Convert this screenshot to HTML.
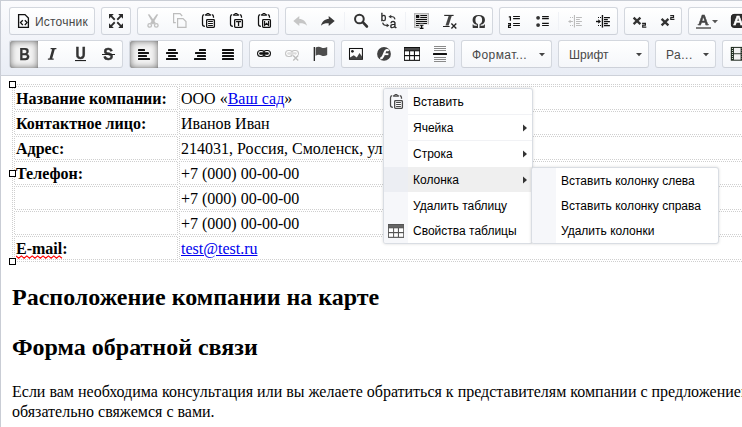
<!DOCTYPE html>
<html><head><meta charset="utf-8">
<style>
*{box-sizing:border-box;margin:0;padding:0}
html,body{width:742px;height:427px;overflow:hidden;background:#fff}
body{position:relative;font-family:"Liberation Sans",sans-serif;font-size:12px;color:#333}
#tb{position:absolute;left:0;top:0;width:742px;height:76px;background:linear-gradient(#fbfbfd,#e9edf5);border-top:1px solid #c9cdd5;border-bottom:1px solid #cdd1d9;border-left:1px solid #c9cdd5}
.g{position:absolute;height:28px;border:1px solid #d3d7de;border-bottom-color:#cdd1d9;border-radius:3px;background:linear-gradient(#ffffff,#f5f7fa);}
.r1{top:7px}.r2{top:40px}
.ic{position:absolute;width:16px;height:16px}
.ic svg{display:block;width:16px;height:16px;overflow:visible}
.on{position:absolute;top:0;height:27px;width:28px;background:#f3f3f3;box-shadow:inset 0 0 7px rgba(0,0,0,.55),inset 0 0 1px rgba(0,0,0,.45);border-radius:3px 0 0 3px}
.sep{position:absolute;top:4px;width:1px;height:18px;background:#f0f2f6}
.lbl{position:absolute;font-size:12px;color:#484848;white-space:nowrap;line-height:14px}
.arr{position:absolute;width:0;height:0;border-left:3px solid transparent;border-right:3px solid transparent;border-top:3px solid #474747}
#ed{position:absolute;left:0;top:76px;width:742px;height:351px;background:#fff;border-left:1px solid #c9cdd5;font-family:"Liberation Serif",serif;color:#000;overflow:hidden}
.t{position:absolute;white-space:nowrap;font-family:"Liberation Serif",serif;font-size:16px;line-height:18px;color:#000}
.b{font-weight:bold}
.lnk{color:#00e;text-decoration:underline}
.hl{position:absolute;height:1px;background-image:linear-gradient(90deg,#cfcfcf 50%,transparent 50%);background-size:2px 1px}
.vl{position:absolute;width:1px;background-image:linear-gradient(#cfcfcf 50%,transparent 50%);background-size:1px 2px}
.hl.o{background-position:1px 0}.vl.o{background-position:0 1px}
.hd{position:absolute;width:7px;height:7px;border:1px solid #000;background:#fff}
.h2{position:absolute;white-space:nowrap;font-family:"Liberation Serif",serif;font-weight:bold;font-size:24px;line-height:28px;color:#000}
.menu{position:absolute;background:#fff;border:1px solid #d9dde3;border-radius:3px;box-shadow:0 0 3px rgba(0,0,0,.15);overflow:hidden}
.menu .gut{position:absolute;left:0;top:0;bottom:0;width:24px;background:#f6f7fa}
.mi{position:absolute;left:0;right:0;height:25px}
.mi.hov{background:#efefef}
.mi.hov .gut2{position:absolute;left:0;top:0;width:24px;height:25px;background:#eceef3}
.mt{position:absolute;font-family:"Liberation Sans",sans-serif;font-size:12px;color:#000;white-space:nowrap;line-height:14px}
.ma{position:absolute;width:0;height:0;border-top:3px solid transparent;border-bottom:3px solid transparent;border-left:3px solid #333}
</style></head><body>
<div id="tb"></div>
<!--TB-->
<div class="g r1" style="left:9px;width:86px"></div>
<div class="g r1" style="left:101px;width:30px"></div>
<div class="g r1" style="left:137px;width:142px"></div>
<div class="g r1" style="left:285px;width:208px"><div class="sep" style="left:58px"></div><div class="sep" style="left:119px"></div></div>
<div class="g r1" style="left:499px;width:119px"><div class="sep" style="left:58px"></div></div>
<div class="g r1" style="left:624px;width:58px"></div>
<div class="g r1" style="left:688px;width:70px"></div>
<div class="g r2" style="left:9px;width:114px"><div class="on" style="left:0"></div></div>
<div class="g r2" style="left:129px;width:114px"><div class="on" style="left:0"></div></div>
<div class="g r2" style="left:249px;width:86px"></div>
<div class="g r2" style="left:341px;width:114px"></div>
<div class="g r2" style="left:461px;width:91px"></div>
<div class="g r2" style="left:558px;width:91px"></div>
<div class="g r2" style="left:655px;width:61px"></div>
<div class="g r2" style="left:722px;width:40px"></div>
<div class="lbl" style="left:35px;top:15px;letter-spacing:0.2px">Источник</div>
<div class="lbl" style="left:472px;top:48px;letter-spacing:0.4px">Формат...</div>
<div class="lbl" style="left:569px;top:48px">Шрифт</div>
<div class="lbl" style="left:666px;top:48px;letter-spacing:0.5px">Ра...</div>
<svg id="ics" width="742" height="76" style="position:absolute;left:0;top:0;will-change:transform"><g transform="translate(16,13)"><path d="M2.6,1.6 H9 L12.4,5 V14.4 H2.6 Z" fill="none" stroke="#111" stroke-width="1.3"/><path d="M6.8,7.2 L4.5,9.6 L6.8,12 M8.8,7.2 L11.1,9.6 L8.8,12" fill="none" stroke="#111" stroke-width="1.3"/></g>
<g transform="translate(108,13)"><g transform="translate(8,8) scale(1,1)"><path d="M-7,-7 H-2.2 L-3.9,-5.2 L-0.6,-1.9 L-1.9,-0.6 L-5.2,-3.9 L-7,-2.2 Z" fill="#2b2b2b"/></g><g transform="translate(8,8) scale(-1,1)"><path d="M-7,-7 H-2.2 L-3.9,-5.2 L-0.6,-1.9 L-1.9,-0.6 L-5.2,-3.9 L-7,-2.2 Z" fill="#2b2b2b"/></g><g transform="translate(8,8) scale(1,-1)"><path d="M-7,-7 H-2.2 L-3.9,-5.2 L-0.6,-1.9 L-1.9,-0.6 L-5.2,-3.9 L-7,-2.2 Z" fill="#2b2b2b"/></g><g transform="translate(8,8) scale(-1,-1)"><path d="M-7,-7 H-2.2 L-3.9,-5.2 L-0.6,-1.9 L-1.9,-0.6 L-5.2,-3.9 L-7,-2.2 Z" fill="#2b2b2b"/></g></g>
<g transform="translate(144,13)"><path d="M3.8,1.4 L5.4,1.2 L11.8,10 L9.6,11.5 Z" fill="#bfbfbf"/><path d="M14.2,1.4 L12.6,1.2 L6.2,10 L8.4,11.5 Z" fill="#bfbfbf"/><circle cx="5.7" cy="12.4" r="1.8" fill="none" stroke="#bfbfbf" stroke-width="1.3"/><circle cx="12.3" cy="12.4" r="1.8" fill="none" stroke="#bfbfbf" stroke-width="1.3"/></g>
<g transform="translate(172,13)"><path d="M3.8,9.6 H1.6 V0.6 H8 L10.2,3" fill="none" stroke="#bdbdbd" stroke-width="1.2"/><path d="M5.6,5.6 H11 L14,8.6 V14.4 H5.6 Z" fill="none" stroke="#bdbdbd" stroke-width="1.2"/></g>
<g transform="translate(200,13)"><path d="M4.2,1.7 C3,1.8 2.5,2.5 2.5,3.7 V11.3 C2.5,12.7 3.2,13.4 4.9,13.4" fill="none" stroke="#111" stroke-width="1.25"/><path d="M11.8,1.7 C13,1.8 13.5,2.5 13.5,3.7 V4.7" fill="none" stroke="#111" stroke-width="1.25"/><path d="M5.1,2.8 V1.5 C5.1,1.1 5.4,0.9 5.8,0.9 H6.2 C6.4,0.3 6.9,0 7.4,0 H8.6 C9.1,0 9.6,0.3 9.8,0.9 H10.2 C10.6,0.9 10.9,1.1 10.9,1.5 V2.8 Z" fill="#111"/><path d="M6.9,1.5 H9.1" stroke="#888" stroke-width="0.8"/><rect x="6.65" y="6.65" width="7.75" height="7.75" rx="0.8" fill="#fff" stroke="#111" stroke-width="1.3"/><path d="M8.1,8.55 H12.9 M8.1,10.5 H12.9 M8.1,12.5 H12.9" stroke="#111" stroke-width="1.05"/></g>
<g transform="translate(228,13)"><path d="M4.2,1.7 C3,1.8 2.5,2.5 2.5,3.7 V11.3 C2.5,12.7 3.2,13.4 4.9,13.4" fill="none" stroke="#111" stroke-width="1.25"/><path d="M11.8,1.7 C13,1.8 13.5,2.5 13.5,3.7 V4.7" fill="none" stroke="#111" stroke-width="1.25"/><path d="M5.1,2.8 V1.5 C5.1,1.1 5.4,0.9 5.8,0.9 H6.2 C6.4,0.3 6.9,0 7.4,0 H8.6 C9.1,0 9.6,0.3 9.8,0.9 H10.2 C10.6,0.9 10.9,1.1 10.9,1.5 V2.8 Z" fill="#111"/><path d="M6.9,1.5 H9.1" stroke="#888" stroke-width="0.8"/><rect x="6.65" y="6.65" width="7.75" height="7.75" rx="0.8" fill="#fff" stroke="#111" stroke-width="1.3"/><path d="M8.1,8.6 H13 M10.55,8.6 V12.9" stroke="#111" stroke-width="1.3" fill="none"/></g>
<g transform="translate(256,13)"><path d="M4.2,1.7 C3,1.8 2.5,2.5 2.5,3.7 V11.3 C2.5,12.7 3.2,13.4 4.9,13.4" fill="none" stroke="#111" stroke-width="1.25"/><path d="M11.8,1.7 C13,1.8 13.5,2.5 13.5,3.7 V4.7" fill="none" stroke="#111" stroke-width="1.25"/><path d="M5.1,2.8 V1.5 C5.1,1.1 5.4,0.9 5.8,0.9 H6.2 C6.4,0.3 6.9,0 7.4,0 H8.6 C9.1,0 9.6,0.3 9.8,0.9 H10.2 C10.6,0.9 10.9,1.1 10.9,1.5 V2.8 Z" fill="#111"/><path d="M6.9,1.5 H9.1" stroke="#888" stroke-width="0.8"/><rect x="6.65" y="6.65" width="7.75" height="7.75" rx="0.8" fill="#fff" stroke="#111" stroke-width="1.3"/><path d="M8.6,8 V12.3 L10.55,10.3 L12.5,12.3 V8" stroke="#111" stroke-width="1.15" fill="none"/></g>
<g transform="translate(292,13)"><path d="M1.3,8 L7.3,3 V6 C11,6 14.2,8.5 15,12.8 C13,10.6 10.5,10.1 7.3,10.2 V13 Z" fill="#c6c6c6"/></g>
<g transform="translate(320,13)"><g transform="translate(16,0) scale(-1,1)"><path d="M1.3,8 L7.3,3 V6 C11,6 14.2,8.5 15,12.8 C13,10.6 10.5,10.1 7.3,10.2 V13 Z" fill="#3a3a3a"/></g></g>
<g transform="translate(353,13)"><circle cx="6.4" cy="6" r="4.35" fill="none" stroke="#333" stroke-width="2"/><path d="M9.8,9.2 L13.9,13.5" stroke="#333" stroke-width="2.6" stroke-linecap="round"/></g>
<g transform="translate(381,13)"><text x="-0.3" y="7.5" font-family="Liberation Sans" font-size="10" fill="#222" stroke="#222" stroke-width="0.35">b</text><text x="8.8" y="15.4" font-family="Liberation Sans" font-size="13.2" fill="#222" stroke="#222" stroke-width="0.35" textLength="6.6" lengthAdjust="spacingAndGlyphs">a</text><path d="M14,6.3 C13.6,4.3 11.8,3.4 9.4,3.6" fill="none" stroke="#333" stroke-width="1.1"/><path d="M10.2,1.8 L7.4,3.7 L10.4,5.4 Z" fill="#333"/><path d="M1.6,9.6 C2,11.6 3.8,12.6 6.2,12.4" fill="none" stroke="#333" stroke-width="1.1"/><path d="M5.6,10.6 L8.4,12.4 L5.6,14.2 Z" fill="#333"/></g>
<g transform="translate(414,13)"><rect x="0.5" y="0.5" width="14" height="14" fill="#d9d9d9" stroke="#b5b5b5" stroke-width="1"/><rect x="2" y="2" width="3.2" height="3" fill="#111"/><path d="M6.3,2.5 H13 M6.3,4.5 H13 M2,6.5 H13 M2,8.5 H13 M2,10.5 H13 M2,12.5 H4.8" stroke="#111" stroke-width="1"/><path d="M5,11.2 H16 V16.5 H5 Z" fill="#fff" opacity="0"/><path d="M7.6,12 V15.6 M5.8,12.2 H9.5 M5.8,15.4 H9.5" stroke="#fff" stroke-width="3" fill="none"/><rect x="9.5" y="11.5" width="6" height="4" fill="#fbfcfd"/><path d="M7.6,12 V15.6" stroke="#111" stroke-width="1.5" fill="none"/><path d="M5.8,12.2 H9.5 M5.8,15.4 H9.5" stroke="#111" stroke-width="1.1" fill="none"/></g>
<g transform="translate(442,13)"><path d="M2.2,2.4 H11.6" stroke="#222" stroke-width="1.1"/><path d="M6.6,2.9 H9.7 L6.6,12.5 H3.5 Z" fill="#444"/><path d="M1,13.5 H7.6" stroke="#222" stroke-width="1"/><path d="M9.4,10.5 L14.3,15.5 M14.3,10.5 L9.4,15.5" stroke="#222" stroke-width="1.3"/></g>
<g transform="translate(470,13)"><text x="8.8" y="14.5" text-anchor="middle" font-family="Liberation Serif" font-weight="bold" font-size="19.5" fill="#333" textLength="14" lengthAdjust="spacingAndGlyphs">Ω</text></g>
<g transform="translate(506,13)"><path d="M2.8,3.8 H4.4 V7.7" fill="none" stroke="#111" stroke-width="1.25"/><path d="M2,10.55 H4.45 V12.4 H2.55 V14.35 H5" fill="none" stroke="#111" stroke-width="1.15"/><path d="M7.1,3.55 H13.9 M7.1,5.6 H13.9 M7.1,10.4 H13.9 M7.1,12.5 H13.9" stroke="#111" stroke-width="1.05"/></g>
<g transform="translate(534,13)"><circle cx="4.1" cy="4.85" r="1.9" fill="#333"/><circle cx="4.1" cy="12.1" r="1.9" fill="#333"/><path d="M8.1,3.55 H14.8 M8.1,5.6 H14.8 M8.1,10.4 H14.8 M8.1,12.5 H14.8" stroke="#111" stroke-width="1.15"/></g>
<g transform="translate(567,13)"><path d="M2,8.5 H5.9" stroke="#bcbcbc" stroke-width="1"/><path d="M3.6,6.8 L1,8.5 L3.6,10.2 Z" fill="#bcbcbc"/><path d="M7.45,2 V14.6" stroke="#bcbcbc" stroke-width="1.1"/><path d="M9,4.5 H14.9 M9,6.5 H12.8 M9,8.5 H14.9 M9,10.5 H12.8 M9,12.5 H14.9" stroke="#bcbcbc" stroke-width="1"/><path d="M3,4.5 H4 M5,4.5 H6 M3,12.5 H4 M5,12.5 H6" stroke="#bcbcbc" stroke-width="1"/></g>
<g transform="translate(595,13)"><path d="M1,8.5 H4" stroke="#111" stroke-width="1.4"/><path d="M3.3,6.2 L6,8.5 L3.3,10.8 Z" fill="#111"/><path d="M7.45,2 V14.6" stroke="#111" stroke-width="1.4"/><path d="M9,4.5 H14.9 M9,6.5 H12.8 M9,8.5 H14.9 M9,10.5 H12.8 M9,12.5 H14.9" stroke="#111" stroke-width="1.25"/><path d="M3,4.5 H4 M5,4.5 H6 M3,12.5 H4 M5,12.5 H6" stroke="#111" stroke-width="1"/></g>
<g transform="translate(631,13)"><path d="M2.6,4.7 L9.4,11.2 M9.4,4.7 L2.6,11.2" stroke="#333" stroke-width="2.3"/><g transform="translate(11.1,9.9)"><path d="M0,0.5 H3.3 V2.3 H0.6 V4.2 H4.2" fill="none" stroke="#222" stroke-width="1.2"/></g></g>
<g transform="translate(659,13)"><path d="M2.6,5.9 L9.4,12.4 M9.4,5.9 L2.6,12.4" stroke="#333" stroke-width="2.3"/><g transform="translate(11.2,2.2)"><path d="M0,0.5 H3.3 V2.3 H0.6 V4.2 H4.2" fill="none" stroke="#222" stroke-width="1.2"/></g></g>
<g transform="translate(695,13)"><text x="8.3" y="11.9" text-anchor="middle" font-family="Liberation Sans" font-weight="bold" font-size="14" fill="#444" stroke="#444" stroke-width="0.5">A</text><path d="M2.6,11.6 H6 M10.6,11.6 H14" stroke="#555" stroke-width="0.8"/><rect x="1" y="14" width="15" height="2" fill="#7d7d7d"/><path d="M17,7 H23 L20,10.2 Z" fill="#555"/></g>
<g transform="translate(729,13)"><rect x="2.4" y="1.4" width="16" height="13" rx="2.5" fill="#2e2e2e" stroke="#1a1a1a" stroke-width="1"/><text x="9.2" y="12.3" text-anchor="middle" font-family="Liberation Sans" font-weight="bold" font-size="13.5" fill="#fff" stroke="#fff" stroke-width="0.5">A</text></g>
<g transform="translate(16,46)"><text x="8.6" y="13.7" text-anchor="middle" font-family="Liberation Sans" font-weight="bold" font-size="16" fill="#333" textLength="10.6" lengthAdjust="spacingAndGlyphs" stroke="#333" stroke-width="0.25">B</text></g>
<g transform="translate(44,46)"><path d="M6.6,2 H12.4 V3.2 H6.6 Z M3.9,12.5 H9.7 V13.7 H3.9 Z M8.3,2.5 H11 L8,13.2 H5.3 Z" fill="#333"/></g>
<g transform="translate(72,46)"><text x="8.5" y="13" text-anchor="middle" font-family="Liberation Sans" font-weight="bold" font-size="15.6" fill="#333" textLength="10.2" lengthAdjust="spacingAndGlyphs" stroke="#333" stroke-width="0.45">U</text><rect x="3" y="14" width="11" height="1.1" fill="#222"/></g>
<g transform="translate(100,46)"><text x="8.3" y="13.5" text-anchor="middle" font-family="Liberation Sans" font-weight="bold" font-size="16" fill="#333" textLength="10" lengthAdjust="spacingAndGlyphs" stroke="#333" stroke-width="0.45">S</text><rect x="2" y="8" width="13" height="1" fill="#222"/></g>
<g transform="translate(136,46)"><rect x="2" y="3" width="7" height="2" rx="0.6" fill="#111"/><rect x="2" y="6" width="11" height="2" rx="0.6" fill="#111"/><rect x="2" y="9" width="9" height="2" rx="0.6" fill="#111"/><rect x="2" y="12" width="12" height="2" rx="0.6" fill="#111"/></g>
<g transform="translate(164,46)"><rect x="4" y="3" width="8" height="2" rx="0.6" fill="#111"/><rect x="2" y="6" width="12" height="2" rx="0.6" fill="#111"/><rect x="4" y="9" width="8" height="2" rx="0.6" fill="#111"/><rect x="2" y="12" width="12" height="2" rx="0.6" fill="#111"/></g>
<g transform="translate(192,46)"><rect x="7" y="3" width="7" height="2" rx="0.6" fill="#111"/><rect x="3" y="6" width="11" height="2" rx="0.6" fill="#111"/><rect x="5" y="9" width="9" height="2" rx="0.6" fill="#111"/><rect x="2" y="12" width="12" height="2" rx="0.6" fill="#111"/></g>
<g transform="translate(220,46)"><rect x="2" y="3" width="12" height="2" rx="0.6" fill="#111"/><rect x="2" y="6" width="12" height="2" rx="0.6" fill="#111"/><rect x="2" y="9" width="12" height="2" rx="0.6" fill="#111"/><rect x="2" y="12" width="12" height="2" rx="0.6" fill="#111"/></g>
<g transform="translate(256,46)"><rect x="1" y="4" width="8.2" height="7" rx="3.5" fill="#111"/><rect x="6.8" y="4" width="8.2" height="7" rx="3.5" fill="#111"/><rect x="2.1" y="5.1" width="5.6" height="4.8" rx="2.4" fill="#fff"/><rect x="8.3" y="5.1" width="5.6" height="4.8" rx="2.4" fill="#fff"/><rect x="3.2" y="6.3" width="9.6" height="2.4" rx="1.2" fill="#111"/></g>
<g transform="translate(284,46)"><rect x="1" y="4" width="8.2" height="7" rx="3.5" fill="#c4c4c4"/><rect x="6.8" y="4" width="8.2" height="7" rx="3.5" fill="#c4c4c4"/><rect x="2.1" y="5.1" width="5.6" height="4.8" rx="2.4" fill="#fff"/><rect x="8.3" y="5.1" width="5.6" height="4.8" rx="2.4" fill="#fff"/><rect x="3.2" y="6.3" width="9.6" height="2.4" rx="1.2" fill="#dcdcdc"/><path d="M9,9.2 L14.3,14.7 M14.3,9.2 L9,14.7" stroke="#fbfcfd" stroke-width="3.2"/><path d="M9.2,9.4 L14.2,14.6 M14.2,9.4 L9.2,14.6" stroke="#bdbdbd" stroke-width="1.4"/></g>
<g transform="translate(312,46)"><path d="M2.3,0.9 V15" stroke="#111" stroke-width="1.2"/><path d="M3.6,1.5 C5.6,0.3 7.8,0.5 9.4,1.4 C11,2.3 13,2.1 15.2,1 V9 C13,10.2 11,10.3 9.4,9.4 C7.8,8.5 5.6,8.3 3.6,9.7 Z" fill="#4d4d4d"/></g>
<g transform="translate(348,46)"><rect x="1.5" y="2.5" width="12.9" height="10.8" fill="#fff" stroke="#111" stroke-width="1.05"/><path d="M2,13 V11.6 L5.8,9.3 L8.8,11.4 L11.5,7.1 L14,10.6 V13 Z" fill="#444"/><circle cx="4.4" cy="5.3" r="1.35" fill="#222"/></g>
<g transform="translate(376,46)"><circle cx="8" cy="7.9" r="6.9" fill="#414141"/><path d="M12.7,4.9 C11.5,3.4 9.8,3.7 9,5.6 L7.2,10 C6.6,11.4 5.6,12.5 4.2,12.3" fill="none" stroke="#fff" stroke-width="2.1"/><path d="M8.6,8.2 H12.4" stroke="#fff" stroke-width="1.8"/></g>
<g transform="translate(404,46)"><rect x="0" y="1" width="16" height="13.9" fill="#111"/><rect x="0.5" y="2" width="15" height="2.4" fill="#4a4a4a"/><rect x="0.9" y="5.3" width="4.2" height="3.7" fill="#fff"/><rect x="6.1" y="5.3" width="3.8" height="3.7" fill="#fff"/><rect x="11" y="5.3" width="4.2" height="3.7" fill="#fff"/><rect x="0.9" y="10.2" width="4.2" height="3.6" fill="#fff"/><rect x="6.1" y="10.2" width="3.8" height="3.6" fill="#fff"/><rect x="11" y="10.2" width="4.2" height="3.6" fill="#fff"/></g>
<g transform="translate(432,46)"><path d="M2,0.5 H14 M2,2.5 H14 M2,4.5 H14 M2,11.5 H14 M2,13.5 H14 M2,15.5 H14" stroke="#8a8a8a" stroke-width="1"/><rect x="1" y="7" width="14" height="2" rx="0.5" fill="#111"/></g>
<g transform="translate(728,46)"><rect x="2.8" y="0.9" width="12.8" height="13.8" fill="#1f2a1f"/><rect x="5.9" y="1.9" width="6.7" height="5.4" fill="#f2f2f2"/><rect x="5.9" y="8.2" width="6.7" height="5.5" fill="#f2f2f2"/><rect x="3.9" y="2" width="1" height="1" fill="#e4efe0"/><rect x="3.9" y="4" width="1" height="1" fill="#e4efe0"/><rect x="3.9" y="6" width="1" height="1" fill="#e4efe0"/><rect x="3.9" y="8" width="1" height="1" fill="#e4efe0"/><rect x="3.9" y="10" width="1" height="1" fill="#e4efe0"/><rect x="3.9" y="12" width="1" height="1" fill="#e4efe0"/><rect x="13.7" y="2" width="1" height="1" fill="#e4efe0"/><rect x="13.7" y="4" width="1" height="1" fill="#e4efe0"/><rect x="13.7" y="6" width="1" height="1" fill="#e4efe0"/><rect x="13.7" y="8" width="1" height="1" fill="#e4efe0"/><rect x="13.7" y="10" width="1" height="1" fill="#e4efe0"/><rect x="13.7" y="12" width="1" height="1" fill="#e4efe0"/></g><path d="M539,53 H545 L542,56.2 Z" fill="#444"/><path d="M636,53 H642 L639,56.2 Z" fill="#444"/><path d="M703,53 H709 L706,56.2 Z" fill="#444"/></svg>
<svg width="742" height="427" style="position:absolute;left:0;top:0;z-index:5;will-change:transform;pointer-events:none"><g transform="translate(388,94)"><path d="M4.2,1.7 C3,1.8 2.5,2.5 2.5,3.7 V11.3 C2.5,12.7 3.2,13.4 4.9,13.4" fill="none" stroke="#4a4a4a" stroke-width="1.25"/><path d="M11.8,1.7 C13,1.8 13.5,2.5 13.5,3.7 V4.7" fill="none" stroke="#4a4a4a" stroke-width="1.25"/><path d="M5.1,2.8 V1.5 C5.1,1.1 5.4,0.9 5.8,0.9 H6.2 C6.4,0.3 6.9,0 7.4,0 H8.6 C9.1,0 9.6,0.3 9.8,0.9 H10.2 C10.6,0.9 10.9,1.1 10.9,1.5 V2.8 Z" fill="#4a4a4a"/><path d="M6.9,1.5 H9.1" stroke="#888" stroke-width="0.8"/><rect x="6.65" y="6.65" width="7.75" height="7.75" rx="0.8" fill="#fff" stroke="#4a4a4a" stroke-width="1.3"/><path d="M8.1,8.55 H12.9 M8.1,10.5 H12.9 M8.1,12.5 H12.9" stroke="#4a4a4a" stroke-width="1.05"/></g><g transform="translate(388,223)"><rect x="0" y="1" width="16" height="13.9" fill="#555"/><rect x="0.5" y="2" width="15" height="2.4" fill="#666"/><rect x="0.9" y="5.3" width="4.2" height="3.7" fill="#fff"/><rect x="6.1" y="5.3" width="3.8" height="3.7" fill="#fff"/><rect x="11" y="5.3" width="4.2" height="3.7" fill="#fff"/><rect x="0.9" y="10.2" width="4.2" height="3.6" fill="#fff"/><rect x="6.1" y="10.2" width="3.8" height="3.6" fill="#fff"/><rect x="11" y="10.2" width="4.2" height="3.6" fill="#fff"/></g><path d="M523,124.5 L527,128 L523,131.5 Z" fill="#333"/><path d="M523,150.5 L527,154 L523,157.5 Z" fill="#333"/><path d="M523,176.5 L527,180 L523,183.5 Z" fill="#333"/></svg>
<!--/TB-->
<div id="ed"></div>
<!--CONTENT-->
<div class="hl o" style="left:12px;top:84px;width:730px"></div>
<div class="hl o" style="left:12px;top:261px;width:730px"></div>
<div class="vl" style="left:12px;top:84px;height:178px"></div>
<div class="hl" style="left:14px;top:86px;width:164px"></div>
<div class="hl o" style="left:14px;top:109px;width:164px"></div>
<div class="vl" style="left:14px;top:86px;height:24px"></div>
<div class="vl o" style="left:177px;top:86px;height:24px"></div>
<div class="hl" style="left:179px;top:86px;width:563px"></div>
<div class="hl o" style="left:179px;top:109px;width:563px"></div>
<div class="vl" style="left:179px;top:86px;height:24px"></div>
<div class="hl" style="left:14px;top:111px;width:164px"></div>
<div class="hl o" style="left:14px;top:134px;width:164px"></div>
<div class="vl" style="left:14px;top:111px;height:24px"></div>
<div class="vl o" style="left:177px;top:111px;height:24px"></div>
<div class="hl" style="left:179px;top:111px;width:563px"></div>
<div class="hl o" style="left:179px;top:134px;width:563px"></div>
<div class="vl" style="left:179px;top:111px;height:24px"></div>
<div class="hl" style="left:14px;top:136px;width:164px"></div>
<div class="hl o" style="left:14px;top:159px;width:164px"></div>
<div class="vl" style="left:14px;top:136px;height:24px"></div>
<div class="vl o" style="left:177px;top:136px;height:24px"></div>
<div class="hl" style="left:179px;top:136px;width:563px"></div>
<div class="hl o" style="left:179px;top:159px;width:563px"></div>
<div class="vl" style="left:179px;top:136px;height:24px"></div>
<div class="hl" style="left:14px;top:161px;width:164px"></div>
<div class="hl o" style="left:14px;top:184px;width:164px"></div>
<div class="vl" style="left:14px;top:161px;height:24px"></div>
<div class="vl o" style="left:177px;top:161px;height:24px"></div>
<div class="hl" style="left:179px;top:161px;width:563px"></div>
<div class="hl o" style="left:179px;top:184px;width:563px"></div>
<div class="vl" style="left:179px;top:161px;height:24px"></div>
<div class="hl" style="left:14px;top:186px;width:164px"></div>
<div class="hl o" style="left:14px;top:209px;width:164px"></div>
<div class="vl" style="left:14px;top:186px;height:24px"></div>
<div class="vl o" style="left:177px;top:186px;height:24px"></div>
<div class="hl" style="left:179px;top:186px;width:563px"></div>
<div class="hl o" style="left:179px;top:209px;width:563px"></div>
<div class="vl" style="left:179px;top:186px;height:24px"></div>
<div class="hl" style="left:14px;top:211px;width:164px"></div>
<div class="hl o" style="left:14px;top:234px;width:164px"></div>
<div class="vl" style="left:14px;top:211px;height:24px"></div>
<div class="vl o" style="left:177px;top:211px;height:24px"></div>
<div class="hl" style="left:179px;top:211px;width:563px"></div>
<div class="hl o" style="left:179px;top:234px;width:563px"></div>
<div class="vl" style="left:179px;top:211px;height:24px"></div>
<div class="hl" style="left:14px;top:236px;width:164px"></div>
<div class="hl o" style="left:14px;top:259px;width:164px"></div>
<div class="vl" style="left:14px;top:236px;height:24px"></div>
<div class="vl o" style="left:177px;top:236px;height:24px"></div>
<div class="hl" style="left:179px;top:236px;width:563px"></div>
<div class="hl o" style="left:179px;top:259px;width:563px"></div>
<div class="vl" style="left:179px;top:236px;height:24px"></div>
<div class="t b" style="left:16px;top:90px">Название компании:</div>
<div class="t" style="left:181px;top:90px">ООО «<span class="lnk">Ваш сад</span>»</div>
<div class="t b" style="left:16px;top:115px">Контактное лицо:</div>
<div class="t" style="left:181px;top:115px">Иванов Иван</div>
<div class="t b" style="left:16px;top:140px">Адрес:</div>
<div class="t" style="left:181px;top:140px">214031, Россия, Смоленск, ул</div>
<div class="t b" style="left:16px;top:165px">Телефон:</div>
<div class="t" style="left:181px;top:165px">+7 (000) 00-00-00</div>
<div class="t" style="left:181px;top:190px">+7 (000) 00-00-00</div>
<div class="t" style="left:181px;top:215px">+7 (000) 00-00-00</div>
<div class="t b" style="left:16px;top:240px">E-mail:</div>
<div class="t" style="left:181px;top:240px"><span class="lnk">test@test.ru</span></div>
<div class="hd" style="left:9px;top:81px"></div>
<div class="hd" style="left:9px;top:170px"></div>
<div class="hd" style="left:9px;top:258px"></div>
<svg style="position:absolute;left:16px;top:255px" width="47" height="5"><path d="M0,0.9 L2.70,3.3 L5.40,0.9 L8.10,3.3 L10.80,0.9 L13.50,3.3 L16.20,0.9 L18.90,3.3 L21.60,0.9 L24.30,3.3 L27.00,0.9 L29.70,3.3 L32.40,0.9 L35.10,3.3 L37.80,0.9 L40.50,3.3 L43.20,0.9 L45.90,3.3" fill="none" stroke="#f00" stroke-width="1.15"/></svg>
<div class="h2" style="left:12px;top:283px">Расположение компании на карте</div>
<div class="h2" style="left:12px;top:333px">Форма обратной связи</div>
<div class="t" style="left:12px;top:383px">Если вам необходима консультация или вы желаете обратиться к представителям компании с предложением</div>
<div class="t" style="left:12px;top:403px">обязательно свяжемся с вами.</div>
<div class="menu" style="left:383px;top:88px;width:150px;height:156px"><div class="gut"></div><div class="mi hov" style="top:78px"><div class="gut2"></div></div><div style="position:absolute;left:24px;right:0;top:25px;height:1px;background:#f1f2f5"></div><div style="position:absolute;left:24px;right:0;top:51px;height:1px;background:#f1f2f5"></div></div>
<div class="mt" style="left:413px;top:95px">Вставить</div>
<div class="mt" style="left:413px;top:121px">Ячейка</div>
<div class="mt" style="left:413px;top:147px">Строка</div>
<div class="mt" style="left:413px;top:173px">Колонка</div>
<div class="mt" style="left:413px;top:199px">Удалить таблицу</div>
<div class="mt" style="left:413px;top:224px">Свойства таблицы</div>
<div class="menu" style="left:531px;top:167px;width:188px;height:77px"><div class="gut"></div></div>
<div class="mt" style="left:561px;top:174px">Вставить колонку слева</div>
<div class="mt" style="left:561px;top:199px">Вставить колонку справа</div>
<div class="mt" style="left:561px;top:224px">Удалить колонки</div>
<!--/CONTENT-->
</body></html>
